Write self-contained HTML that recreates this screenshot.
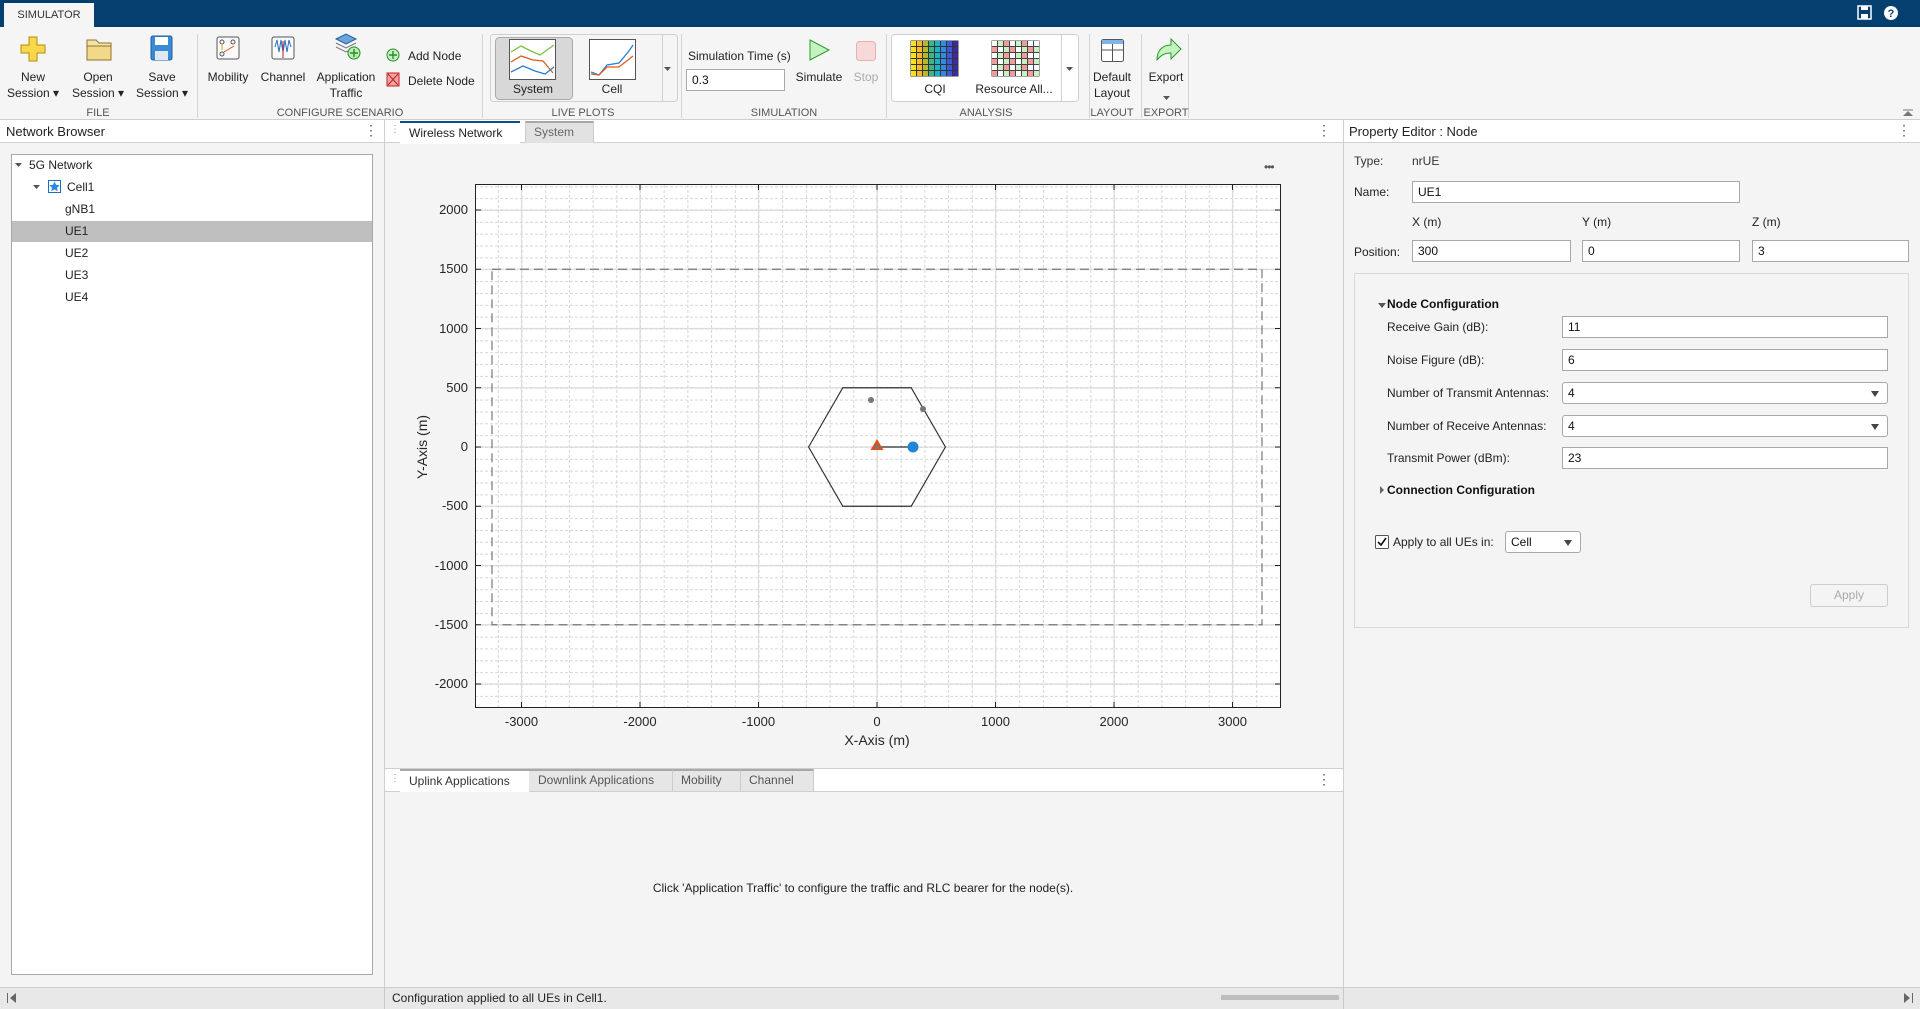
<!DOCTYPE html>
<html><head><meta charset="utf-8"><style>
*{box-sizing:border-box;margin:0;padding:0}
body{width:1920px;height:1009px;overflow:hidden;background:#f4f4f4;font-family:"Liberation Sans",Arial,sans-serif;font-size:12px;color:#212121;position:relative}
.a{position:absolute}
.c{position:absolute;text-align:center;white-space:nowrap;transform:translateX(-50%)}
.lbl{font-size:12px;color:#222;line-height:16px}
.sec{position:absolute;top:107px;font-size:11px;color:#555;transform:translateX(-50%);white-space:nowrap}
.sep{position:absolute;top:34px;width:1px;height:84px;background:#d4d4d4}
.inp{position:absolute;background:#fff;border:1px solid #a8a8a8;height:22px;font-size:12px;line-height:20px;padding-left:5px;color:#111}
.dd{border-radius:3px}
.dd:after{content:"";position:absolute;right:8px;top:8px;border-left:4px solid transparent;border-right:4px solid transparent;border-top:6px solid #444}
.row{position:absolute;left:1387px;font-size:12px;color:#222}
.tree{position:absolute;font-size:12px;color:#222}
</style></head><body>
<div class="a" style="left:0;top:0;width:1920px;height:27px;background:#053f6f"></div>
<div class="a" style="left:4px;top:3px;width:90px;height:24px;background:#f5f5f5;font-size:11px;line-height:24px;text-align:center;color:#333">SIMULATOR</div>
<svg class="a" style="left:1857px;top:5px" width="50" height="16"><rect x="1" y="1" width="13" height="13" fill="none" stroke="#fff" stroke-width="1.5"/><rect x="4" y="1" width="7" height="4" fill="#fff"/><rect x="4" y="9" width="7" height="5" fill="#fff"/><circle cx="34" cy="8" r="7" fill="#fff"/><text x="34" y="12" font-size="11" font-weight="bold" text-anchor="middle" fill="#053f6f" font-family="Liberation Sans">?</text></svg>
<div class="a" style="left:0;top:27px;width:1920px;height:93px;background:#f5f5f5;border-bottom:1px solid #cfcfcf"></div>
<svg class="a" style="left:0;top:27px" width="1920" height="93">
 <path d="M29 10h8v8h8v8h-8v8h-8v-8h-8v-8h8z" fill="#f8d84a" stroke="#b38e00"/>
 <path d="M87 13h9l3 3h12v17h-24z" fill="#f6e3a3" stroke="#8a7330"/><path d="M87 19h24v14h-24z" fill="#f2d98a" stroke="#8a7330"/>
 <rect x="151" y="9" width="21" height="24" rx="2" fill="#3a8ad6" stroke="#1f5f9e"/><rect x="155" y="10" width="13" height="8" fill="#fff"/><rect x="155" y="24" width="13" height="9" fill="#dfe9f5"/>
 <rect x="217" y="10" width="22" height="22" rx="2" fill="#fafafa" stroke="#555"/><circle cx="222" cy="15" r="2" fill="none" stroke="#555"/><circle cx="233" cy="15" r="2" fill="none" stroke="#555"/><circle cx="222" cy="27" r="2" fill="none" stroke="#555"/><line x1="224" y1="25" x2="234" y2="19" stroke="#d95319"/><line x1="222" y1="18" x2="222" y2="23" stroke="#e0a000"/>
 <rect x="272" y="10" width="22" height="22" rx="2" fill="#fafafa" stroke="#555"/><path d="M275 20l2-7 2 12 2-12 2 12 2-12 2 12 2-12 2 7" stroke="#2a6fc0" fill="none"/><line x1="283" y1="14" x2="283" y2="31" stroke="#c02020"/>
 <path d="M336 12l10-5 10 5-10 5z" fill="#6aa4e0" stroke="#2a5f9a"/><path d="M336 16l10 5 10-5M336 20l10 5 10-5" fill="none" stroke="#777"/><circle cx="354" cy="26" r="6" fill="#b7f0b0" stroke="#2a8a2a"/><path d="M354 22v8M350 26h8" stroke="#2a8a2a" stroke-width="1.4"/>
 <circle cx="393" cy="28" r="6" fill="#c5f3c0" stroke="#2a8a2a"/><path d="M393 24v8M389 28h8" stroke="#2a8a2a" stroke-width="1.4"/>
 <rect x="387" y="46" width="12" height="13" fill="#f4a3a3" stroke="#c02020"/><path d="M388 47l10 11M398 47l-10 11" stroke="#c02020"/>
 <rect x="490.5" y="7.5" width="187" height="67" rx="3" fill="#f5f5f5" stroke="#d0d0d0"/>
 <rect x="495.5" y="10.5" width="77" height="62" rx="4" fill="#d8d8d8" stroke="#aaa"/>
 <rect x="509.5" y="12.5" width="46" height="40" fill="#fff" stroke="#555"/>
 <path d="M511 25l10-6 10 5 9 4 14-10" fill="none" stroke="#7fbf3f" stroke-width="1.3"/><path d="M511 35l10-6 12 4 10 1 10 12" fill="none" stroke="#e05a20" stroke-width="1.3"/><path d="M511 45l12-6 12 5 10 3 9-7" fill="none" stroke="#2a7fd0" stroke-width="1.3"/>
 <rect x="589.5" y="12.5" width="46" height="40" fill="#fff" stroke="#555"/>
 <path d="M591 45l8 3 8-10 12-2 10-12 4-6" fill="none" stroke="#2a7fd0" stroke-width="1.3"/><path d="M591 47l8 1 8-8 12 0 14-11" fill="none" stroke="#e05a20" stroke-width="1.3"/>
 <line x1="662.5" y1="8" x2="662.5" y2="74" stroke="#d0d0d0"/><path d="M664 40h7l-3.5 4z" fill="#555"/>
 <path d="M810 13l19 10-19 10z" fill="#c5f3c0" stroke="#2a9a2a"/>
 <rect x="856.5" y="14.5" width="19" height="19" rx="3" fill="#f8d8d8" stroke="#e8b0b0"/>
 <rect x="891.5" y="7.5" width="187" height="67" rx="3" fill="#fff" stroke="#d0d0d0"/>
 <line x1="1061.5" y1="8" x2="1061.5" y2="74" stroke="#d0d0d0"/><path d="M1066 40h7l-3.5 4z" fill="#555"/>
 <rect x="1101.5" y="12.5" width="22" height="22" rx="2" fill="#fff" stroke="#555"/><rect x="1102" y="13" width="21" height="4" fill="#7fb4e8"/><path d="M1102 23h21M1112.5 17v17" stroke="#555"/>
 <path d="M1157 33c0-10 6-15 14-15v-6l10 10-10 10v-6c-6 0-10 2-14 7z" fill="#c5f3c0" stroke="#2a9a2a"/>
 <path d="M1163 69h7l-3.5 4z" fill="#555"/>
 <path d="M1903 89h10l-5-5z" fill="#777"/><line x1="1903" y1="83" x2="1913" y2="83" stroke="#777"/>
</svg>
<svg class="a" style="left:910px;top:40px" width="140" height="40">
 <defs>
 <g id="cqr"><rect x="1" y="1" width="5" height="5" fill="#f7e21b"/><rect x="7" y="1" width="5" height="5" fill="#f9b82a"/><rect x="13" y="1" width="5" height="5" fill="#b7b82c"/><rect x="19" y="1" width="5" height="5" fill="#3cb583"/><rect x="25" y="1" width="5" height="5" fill="#19b2c9"/><rect x="31" y="1" width="5" height="5" fill="#2f8ae0"/><rect x="37" y="1" width="5" height="5" fill="#3a5ad8"/><rect x="43" y="1" width="5" height="5" fill="#3d2a9e"/></g>
 <g id="rr"><rect x="82" y="1" width="5" height="5" fill="#fff"/><rect x="88" y="1" width="5" height="5" fill="#c9f0c0"/><rect x="94" y="1" width="5" height="5" fill="#f39b9b"/><rect x="100" y="1" width="5" height="5" fill="#fff"/><rect x="106" y="1" width="5" height="5" fill="#c9f0c0"/><rect x="112" y="1" width="5" height="5" fill="#f39b9b"/><rect x="118" y="1" width="5" height="5" fill="#fff"/><rect x="124" y="1" width="5" height="5" fill="#fff"/></g>
 <g id="rr2"><rect x="82" y="1" width="5" height="5" fill="#f39b9b"/><rect x="88" y="1" width="5" height="5" fill="#fff"/><rect x="94" y="1" width="5" height="5" fill="#c9f0c0"/><rect x="100" y="1" width="5" height="5" fill="#f39b9b"/><rect x="106" y="1" width="5" height="5" fill="#fff"/><rect x="112" y="1" width="5" height="5" fill="#c9f0c0"/><rect x="118" y="1" width="5" height="5" fill="#f39b9b"/><rect x="124" y="1" width="5" height="5" fill="#c9f0c0"/></g>
 </defs>
 <rect x="0.5" y="0.5" width="48" height="36" fill="#333"/>
 <use href="#cqr"/><use href="#cqr" y="6"/><use href="#cqr" y="12"/><use href="#cqr" y="18"/><use href="#cqr" y="24"/><use href="#cqr" y="30"/>
 <rect x="81.5" y="0.5" width="48" height="36" fill="#444"/>
 <use href="#rr"/><use href="#rr2" y="6"/><use href="#rr" y="12"/><use href="#rr2" y="18"/><use href="#rr" y="24"/><use href="#rr2" y="30"/>
</svg>
<div class="c lbl" style="left:33px;top:69px">New<br>Session ▾</div>
<div class="c lbl" style="left:98px;top:69px">Open<br>Session ▾</div>
<div class="c lbl" style="left:162px;top:69px">Save<br>Session ▾</div>
<div class="c lbl" style="left:228px;top:69px">Mobility</div>
<div class="c lbl" style="left:283px;top:69px">Channel</div>
<div class="c lbl" style="left:346px;top:69px">Application<br>Traffic</div>
<div class="a lbl" style="left:408px;top:48px">Add Node</div>
<div class="a lbl" style="left:408px;top:73px">Delete Node</div>
<div class="c lbl" style="left:533px;top:81px">System</div>
<div class="c lbl" style="left:612px;top:81px">Cell</div>
<div class="a lbl" style="left:688px;top:48px">Simulation Time (s)</div>
<div class="inp" style="left:686px;top:69px;width:99px">0.3</div>
<div class="c lbl" style="left:819px;top:69px">Simulate</div>
<div class="c lbl" style="left:866px;top:69px;color:#aaa">Stop</div>
<div class="c lbl" style="left:935px;top:81px">CQI</div>
<div class="c lbl" style="left:1014px;top:81px">Resource All...</div>
<div class="c lbl" style="left:1112px;top:69px">Default<br>Layout</div>
<div class="c lbl" style="left:1166px;top:69px">Export</div>
<div class="sep" style="left:197px"></div><div class="sep" style="left:482px"></div><div class="sep" style="left:681px"></div><div class="sep" style="left:886px"></div><div class="sep" style="left:1089px"></div><div class="sep" style="left:1141px"></div><div class="sep" style="left:1188px"></div>
<div class="sec" style="left:98px">FILE</div><div class="sec" style="left:340px">CONFIGURE SCENARIO</div><div class="sec" style="left:583px">LIVE PLOTS</div><div class="sec" style="left:784px">SIMULATION</div><div class="sec" style="left:986px">ANALYSIS</div><div class="sec" style="left:1112px">LAYOUT</div><div class="sec" style="left:1166px">EXPORT</div>

<div class="a" style="left:0;top:120px;width:385px;height:23px;background:#fff;border-bottom:1px solid #cfcfcf"></div>
<div class="a" style="left:6px;top:124px;font-size:13px;color:#222">Network Browser</div>
<div class="a" style="left:364px;top:122px;font-size:14px;color:#555">⋮</div>
<div class="a" style="left:11px;top:154px;width:362px;height:821px;background:#fff;border:1px solid #a8a8a8"></div>
<div class="a" style="left:12px;top:221px;width:360px;height:21px;background:#bfbfbf"></div>
<svg class="a" style="left:14px;top:160px" width="50" height="40"><path d="M1 3h7l-3.5 4z" fill="#555"/><path d="M19 25h7l-3.5 4z" fill="#555"/><rect x="34.5" y="20.5" width="12" height="12" fill="#fff" stroke="#1f6fc0"/><path d="M40.5 21.5l1.6 3.4 3.6.4-2.7 2.4.8 3.6-3.3-1.9-3.3 1.9.8-3.6-2.7-2.4 3.6-.4z" fill="#2a86e0"/></svg>
<div class="tree" style="left:29px;top:158px">5G Network</div>
<div class="tree" style="left:67px;top:180px">Cell1</div>
<div class="tree" style="left:65px;top:202px">gNB1</div>
<div class="tree" style="left:65px;top:224px">UE1</div>
<div class="tree" style="left:65px;top:246px">UE2</div>
<div class="tree" style="left:65px;top:268px">UE3</div>
<div class="tree" style="left:65px;top:290px">UE4</div>
<div class="a" style="left:384px;top:120px;width:1px;height:867px;background:#cfcfcf"></div>

<div class="a" style="left:385px;top:120px;width:959px;height:23px;background:#fff;border-bottom:1px solid #cfcfcf"></div>
<div class="a" style="left:390px;top:124px;font-size:10px;color:#999">⋮</div>
<div class="a" style="left:400px;top:121px;width:120px;height:23px;background:#fff;border-top:2px solid #0b4f86;font-size:12px;line-height:20px;padding-left:9px;color:#222">Wireless Network</div>
<div class="a" style="left:525px;top:121px;width:69px;height:22px;background:#e2e2e2;border-top:2px solid #a8a8a8;border-left:1px solid #ccc;border-right:1px solid #ccc;font-size:12px;line-height:19px;padding-left:8px;color:#666">System</div>
<div class="a" style="left:1317px;top:122px;font-size:14px;color:#555">⋮</div>
<div class="a" style="left:1264px;top:160px;font-size:12px;color:#555;letter-spacing:-1px">•••</div>

<svg class="a" style="left:0;top:0" width="1920" height="1009">
 <defs>
  <pattern id="gx" x="877" y="0" width="23.7" height="1009" patternUnits="userSpaceOnUse"><line x1="0.5" y1="0" x2="0.5" y2="1009" stroke="#d6d6d6" stroke-dasharray="3 2"/></pattern>
  <pattern id="gy" x="0" y="447" width="1920" height="11.85" patternUnits="userSpaceOnUse"><line x1="0" y1="0.5" x2="1920" y2="0.5" stroke="#d6d6d6" stroke-dasharray="3 2"/></pattern>
 </defs>
 <rect x="475" y="184" width="806" height="524" fill="#fff"/>
 <rect x="475" y="184" width="806" height="524" fill="url(#gx)"/>
 <rect x="475" y="184" width="806" height="524" fill="url(#gy)"/>
 <g stroke="#dcdcdc" stroke-width="1.2">
  <line x1="521.5" y1="184" x2="521.5" y2="708"/><line x1="640" y1="184" x2="640" y2="708"/><line x1="758.5" y1="184" x2="758.5" y2="708"/><line x1="877" y1="184" x2="877" y2="708"/><line x1="995.5" y1="184" x2="995.5" y2="708"/><line x1="1114" y1="184" x2="1114" y2="708"/><line x1="1232.5" y1="184" x2="1232.5" y2="708"/>
  <line x1="475" y1="210" x2="1281" y2="210"/><line x1="475" y1="269.25" x2="1281" y2="269.25"/><line x1="475" y1="328.5" x2="1281" y2="328.5"/><line x1="475" y1="387.75" x2="1281" y2="387.75"/><line x1="475" y1="447" x2="1281" y2="447"/><line x1="475" y1="506.25" x2="1281" y2="506.25"/><line x1="475" y1="565.5" x2="1281" y2="565.5"/><line x1="475" y1="624.75" x2="1281" y2="624.75"/><line x1="475" y1="684" x2="1281" y2="684"/>
 </g>
 <g stroke="#222" stroke-width="1">
  <path d="M521.5 184v6M640 184v6M758.5 184v6M877 184v6M995.5 184v6M1114 184v6M1232.5 184v6M521.5 708v-6M640 708v-6M758.5 708v-6M877 708v-6M995.5 708v-6M1114 708v-6M1232.5 708v-6"/>
  <path d="M475 210h6M475 269.25h6M475 328.5h6M475 387.75h6M475 447h6M475 506.25h6M475 565.5h6M475 624.75h6M475 684h6M1281 210h-6M1281 269.25h-6M1281 328.5h-6M1281 387.75h-6M1281 447h-6M1281 506.25h-6M1281 565.5h-6M1281 624.75h-6M1281 684h-6"/>
 </g>
 <rect x="492" y="269.25" width="770" height="355.5" fill="none" stroke="#777" stroke-width="1.2" stroke-dasharray="9 5"/>
 <path d="M808.6 447L842.8 387.75H911.2L945.4 447L911.2 506.25H842.8Z" fill="none" stroke="#333" stroke-width="1.2"/>
 <line x1="877" y1="447" x2="912.5" y2="447" stroke="#777" stroke-width="2"/>
 <circle cx="871" cy="400" r="3" fill="#777"/><circle cx="923" cy="409" r="3" fill="#777"/>
 <path d="M877 439l6.5 11h-13z" fill="#d95319"/><circle cx="877" cy="447" r="2" fill="#777"/>
 <circle cx="913" cy="447" r="5.5" fill="#1f86d8"/>
 <rect x="475.5" y="184.5" width="805" height="523" fill="none" stroke="#222" stroke-width="1"/>
 <g font-family="Liberation Sans" font-size="13" fill="#262626" text-anchor="end">
  <text x="468" y="214">2000</text><text x="468" y="273">1500</text><text x="468" y="333">1000</text><text x="468" y="392">500</text><text x="468" y="451">0</text><text x="468" y="510">-500</text><text x="468" y="570">-1000</text><text x="468" y="629">-1500</text><text x="468" y="688">-2000</text>
 </g>
 <g font-family="Liberation Sans" font-size="13" fill="#262626" text-anchor="middle">
  <text x="521.5" y="726">-3000</text><text x="640" y="726">-2000</text><text x="758.5" y="726">-1000</text><text x="877" y="726">0</text><text x="995.5" y="726">1000</text><text x="1114" y="726">2000</text><text x="1232.5" y="726">3000</text>
  <text x="877" y="745" font-size="14">X-Axis (m)</text>
  <text x="0" y="0" font-size="14" transform="translate(427 447) rotate(-90)">Y-Axis (m)</text>
 </g>
</svg>

<div class="a" style="left:385px;top:768px;width:959px;height:24px;background:#fff;border-top:1px solid #cfcfcf;border-bottom:1px solid #cfcfcf"></div>
<div class="a" style="left:390px;top:773px;font-size:10px;color:#999">⋮</div>
<div class="a" style="left:400px;top:769px;width:129px;height:23px;background:#fff;border-top:2px solid #a8a8a8;font-size:12px;line-height:20px;padding-left:9px;color:#333">Uplink Applications</div>
<div class="a" style="left:529px;top:769px;width:144px;height:22px;background:#e6e6e6;border-top:2px solid #a8a8a8;border-right:1px solid #ccc;font-size:12px;line-height:19px;padding-left:9px;color:#555">Downlink Applications</div>
<div class="a" style="left:673px;top:769px;width:68px;height:22px;background:#e6e6e6;border-top:2px solid #a8a8a8;border-right:1px solid #ccc;font-size:12px;line-height:19px;padding-left:8px;color:#555">Mobility</div>
<div class="a" style="left:741px;top:769px;width:73px;height:22px;background:#e6e6e6;border-top:2px solid #a8a8a8;border-right:1px solid #ccc;font-size:12px;line-height:19px;padding-left:8px;color:#555">Channel</div>
<div class="a" style="left:1317px;top:771px;font-size:14px;color:#555">⋮</div>
<div class="c" style="left:863px;top:881px;font-size:12px;color:#222">Click 'Application Traffic' to configure the traffic and RLC bearer for the node(s).</div>
<div class="a" style="left:1343px;top:120px;width:1px;height:867px;background:#cfcfcf"></div>

<div class="a" style="left:1344px;top:120px;width:576px;height:23px;background:#fff;border-bottom:1px solid #cfcfcf"></div>
<div class="a" style="left:1349px;top:124px;font-size:13px;color:#222">Property Editor : Node</div>
<div class="a" style="left:1897px;top:122px;font-size:14px;color:#555">⋮</div>
<div class="row" style="left:1354px;top:154px;color:#333">Type:</div>
<div class="row" style="left:1412px;top:154px;color:#333">nrUE</div>
<div class="row" style="left:1354px;top:185px">Name:</div>
<div class="inp" style="left:1412px;top:181px;width:328px">UE1</div>
<div class="row" style="left:1412px;top:215px">X (m)</div><div class="row" style="left:1582px;top:215px">Y (m)</div><div class="row" style="left:1752px;top:215px">Z (m)</div>
<div class="row" style="left:1354px;top:245px">Position:</div>
<div class="inp" style="left:1412px;top:240px;width:159px">300</div>
<div class="inp" style="left:1582px;top:240px;width:158px">0</div>
<div class="inp" style="left:1752px;top:240px;width:157px">3</div>
<div class="a" style="left:1354px;top:273px;width:555px;height:355px;border:1px solid #d8d8d8"></div>
<div class="a" style="left:1378px;top:303px;border-left:4px solid transparent;border-right:4px solid transparent;border-top:5px solid #555"></div>
<div class="row" style="top:297px;font-weight:bold;color:#111">Node Configuration</div>
<div class="row" style="top:320px">Receive Gain (dB):</div><div class="inp" style="left:1562px;top:316px;width:326px">11</div>
<div class="row" style="top:353px">Noise Figure (dB):</div><div class="inp" style="left:1562px;top:349px;width:326px">6</div>
<div class="row" style="top:386px">Number of Transmit Antennas:</div><div class="inp dd" style="left:1562px;top:382px;width:326px">4</div>
<div class="row" style="top:419px">Number of Receive Antennas:</div><div class="inp dd" style="left:1562px;top:415px;width:326px">4</div>
<div class="row" style="top:451px">Transmit Power (dBm):</div><div class="inp" style="left:1562px;top:447px;width:326px">23</div>
<div class="a" style="left:1380px;top:486px;border-top:4px solid transparent;border-bottom:4px solid transparent;border-left:4px solid #666"></div>
<div class="row" style="top:483px;font-weight:bold;color:#111">Connection Configuration</div>
<svg class="a" style="left:1375px;top:535px" width="15" height="15"><rect x="0.5" y="0.5" width="13" height="13" rx="1" fill="#fff" stroke="#555"/><path d="M3 7l3 3 5-7" fill="none" stroke="#111" stroke-width="1.6"/></svg>
<div class="row" style="left:1393px;top:535px">Apply to all UEs in:</div>
<div class="inp dd" style="left:1505px;top:531px;width:76px">Cell</div>
<div class="a" style="left:1810px;top:584px;width:78px;height:23px;border:1px solid #ccc;border-radius:3px;background:#f4f4f4;color:#aaa;text-align:center;line-height:21px;font-size:12px">Apply</div>

<div class="a" style="left:0;top:987px;width:1920px;height:22px;background:#e8e8e8;border-top:1px solid #cfcfcf"></div>
<div class="a" style="left:384px;top:987px;width:1px;height:22px;background:#c8c8c8"></div>
<div class="a" style="left:1343px;top:987px;width:1px;height:22px;background:#c8c8c8"></div>
<div class="a" style="left:392px;top:991px;font-size:12px;color:#222">Configuration applied to all UEs in Cell1.</div>
<div class="a" style="left:1221px;top:995px;width:118px;height:5px;background:#bdbdbd"></div>
<svg class="a" style="left:6px;top:992px" width="12" height="12"><line x1="1.5" y1="1" x2="1.5" y2="11" stroke="#666"/><path d="M10 1v10l-6-5z" fill="#666"/></svg>
<svg class="a" style="left:1902px;top:992px" width="12" height="12"><line x1="10.5" y1="1" x2="10.5" y2="11" stroke="#666"/><path d="M2 1v10l6-5z" fill="#666"/></svg>
</body></html>
